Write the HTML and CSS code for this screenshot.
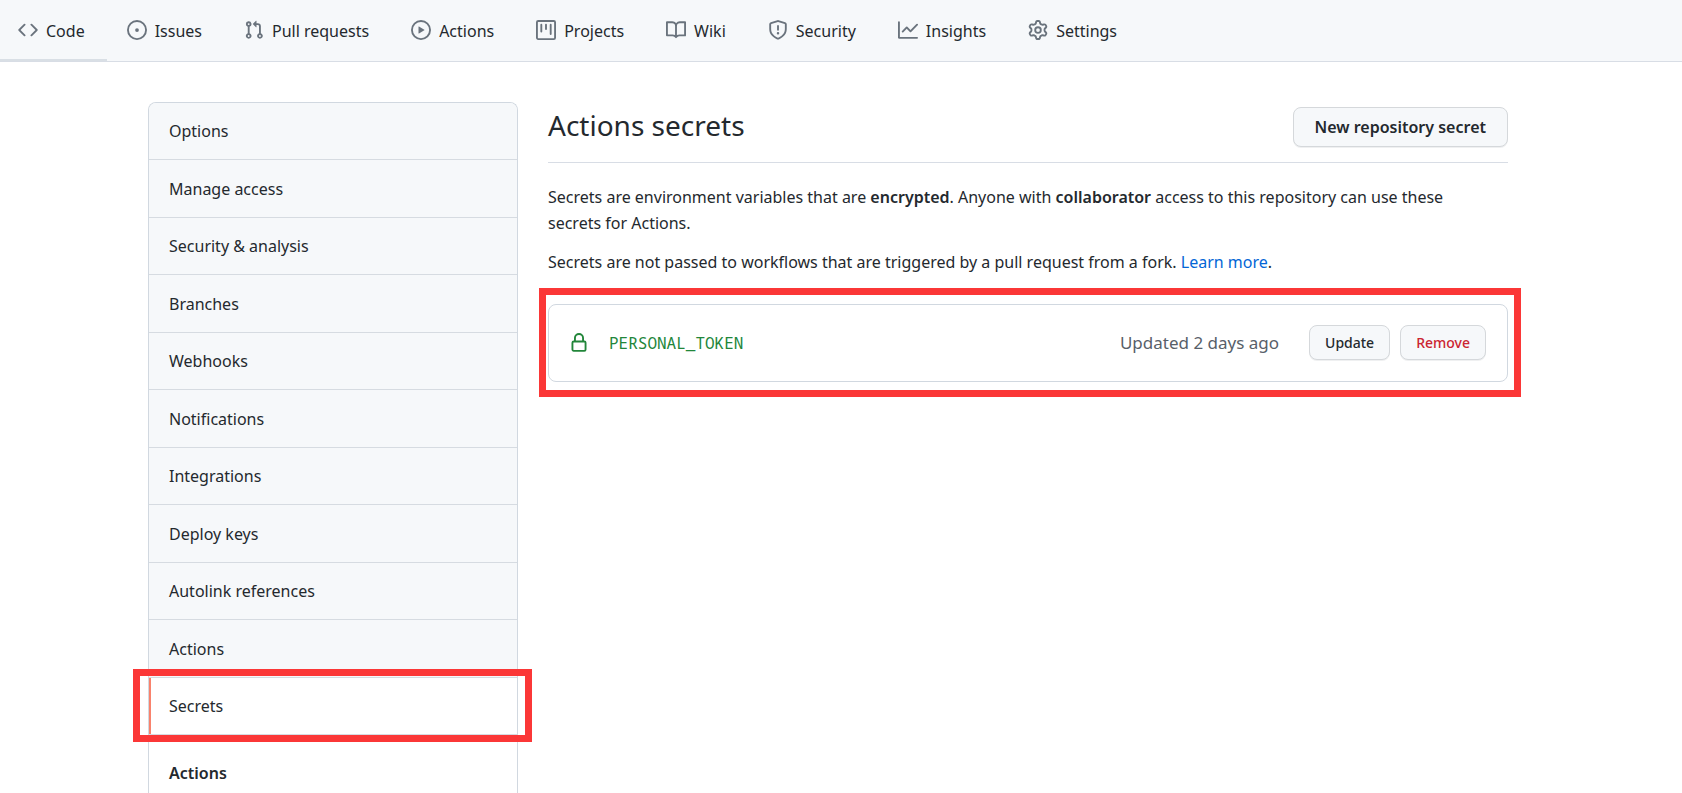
FILE: index.html
```html
<!DOCTYPE html>
<html lang="en">
<head>
<meta charset="utf-8">
<title>Actions secrets</title>
<link rel="stylesheet" href="styles.css">
</head>
<body>
<nav class="tabs" aria-label="Repository">
  <a class="tab tab-current" href="#"><svg class="icon" viewBox="0 0 16 16"><path fill-rule="evenodd" d="M4.72 3.22a.75.75 0 011.06 1.06L2.06 8l3.72 3.72a.75.75 0 11-1.06 1.06L.47 8.53a.75.75 0 010-1.06l4.25-4.25zm6.56 0a.75.75 0 10-1.06 1.06L13.94 8l-3.72 3.72a.75.75 0 101.06 1.06l4.25-4.25a.75.75 0 000-1.06l-4.25-4.25z"/></svg><span class="tab-label">Code</span></a>
  <a class="tab" href="#"><svg class="icon" viewBox="0 0 16 16"><path d="M8 9.5a1.5 1.5 0 100-3 1.5 1.5 0 000 3z"/><path fill-rule="evenodd" d="M8 0a8 8 0 100 16A8 8 0 008 0zM1.5 8a6.5 6.5 0 1113 0 6.5 6.5 0 01-13 0z"/></svg><span class="tab-label">Issues</span></a>
  <a class="tab" href="#"><svg class="icon" viewBox="0 0 16 16"><path fill-rule="evenodd" d="M7.177 3.073L9.573.677A.25.25 0 0110 .854v4.792a.25.25 0 01-.427.177L7.177 3.427a.25.25 0 010-.354zM3.75 2.5a.75.75 0 100 1.5.75.75 0 000-1.5zm-2.25.75a2.25 2.25 0 113 2.122v5.256a2.251 2.251 0 11-1.5 0V5.372A2.25 2.25 0 011.5 3.25zM11 2.5h-1V4h1a1 1 0 011 1v5.628a2.251 2.251 0 101.5 0V5A2.5 2.5 0 0011 2.5zm1 10.25a.75.75 0 111.5 0 .75.75 0 01-1.5 0zM3.75 12a.75.75 0 100 1.5.75.75 0 000-1.5z"/></svg><span class="tab-label">Pull requests</span></a>
  <a class="tab" href="#"><svg class="icon" viewBox="0 0 16 16"><path fill-rule="evenodd" d="M1.5 8a6.5 6.5 0 1113 0 6.5 6.5 0 01-13 0zM8 0a8 8 0 100 16A8 8 0 008 0zM6.379 5.227A.25.25 0 006 5.442v5.117a.25.25 0 00.379.214l4.264-2.559a.25.25 0 000-.428L6.379 5.227z"/></svg><span class="tab-label">Actions</span></a>
  <a class="tab" href="#"><svg class="icon" viewBox="0 0 16 16"><path fill-rule="evenodd" d="M1.75 0A1.75 1.75 0 000 1.75v12.5C0 15.216.784 16 1.75 16h12.5A1.75 1.75 0 0016 14.25V1.75A1.75 1.75 0 0014.25 0H1.75zM1.5 1.75a.25.25 0 01.25-.25h12.5a.25.25 0 01.25.25v12.5a.25.25 0 01-.25.25H1.75a.25.25 0 01-.25-.25V1.75zM11.75 3a.75.75 0 00-.75.75v7.5a.75.75 0 001.5 0v-7.5a.75.75 0 00-.75-.75zm-8.25.75a.75.75 0 011.5 0v5.5a.75.75 0 01-1.5 0v-5.5zM8 3a.75.75 0 00-.75.75v3.5a.75.75 0 001.5 0v-3.5A.75.75 0 008 3z"/></svg><span class="tab-label">Projects</span></a>
  <a class="tab" href="#"><svg class="icon" viewBox="0 0 16 16"><path fill-rule="evenodd" d="M0 1.75A.75.75 0 01.75 1h4.253c1.227 0 2.317.59 3 1.501A3.744 3.744 0 0111.006 1h4.245a.75.75 0 01.75.75v10.5a.75.75 0 01-.75.75h-4.507a2.25 2.25 0 00-1.591.659l-.622.621a.75.75 0 01-1.06 0l-.622-.621A2.25 2.25 0 005.258 13H.75a.75.75 0 01-.75-.75V1.75zm8.755 3a2.25 2.25 0 012.25-2.25H14.5v9h-3.757c-.71 0-1.4.201-1.992.572l.004-7.322zm-1.504 7.324l.004-5.073-.002-2.253A2.25 2.25 0 005.003 2.5H1.5v9h3.757a3.75 3.75 0 011.994.574z"/></svg><span class="tab-label">Wiki</span></a>
  <a class="tab" href="#"><svg class="icon" viewBox="0 0 16 16"><path fill-rule="evenodd" d="M7.467.133a1.75 1.75 0 011.066 0l5.25 1.68A1.75 1.75 0 0115 3.48V7c0 1.566-.32 3.182-1.303 4.682-.983 1.498-2.585 2.813-5.032 3.855a1.7 1.7 0 01-1.33 0c-2.447-1.042-4.049-2.357-5.032-3.855C1.32 10.182 1 8.566 1 7V3.48a1.75 1.75 0 011.217-1.667l5.25-1.68zm.61 1.429a.25.25 0 00-.153 0l-5.25 1.68a.25.25 0 00-.174.238V7c0 1.358.275 2.666 1.057 3.86.784 1.194 2.121 2.34 4.366 3.297a.2.2 0 00.154 0c2.245-.956 3.582-2.104 4.366-3.298C13.225 9.666 13.5 8.36 13.5 7V3.48a.25.25 0 00-.174-.237l-5.25-1.68zM9 10.5a1 1 0 11-2 0 1 1 0 012 0zm-.25-5.75a.75.75 0 10-1.5 0v3a.75.75 0 001.5 0v-3z"/></svg><span class="tab-label">Security</span></a>
  <a class="tab" href="#"><svg class="icon" viewBox="0 0 16 16"><path fill-rule="evenodd" d="M1.5 1.75a.75.75 0 00-1.5 0v12.5c0 .414.336.75.75.75h14.5a.75.75 0 000-1.5H1.5V1.75zm14.28 2.53a.75.75 0 00-1.06-1.06L10 7.94 7.53 5.47a.75.75 0 00-1.06 0L3.22 8.72a.75.75 0 001.06 1.06L7 7.06l2.47 2.47a.75.75 0 001.06 0l5.25-5.25z"/></svg><span class="tab-label">Insights</span></a>
  <a class="tab" href="#"><svg class="icon" viewBox="0 0 16 16"><path fill-rule="evenodd" d="M7.429 1.525a6.593 6.593 0 011.142 0c.036.003.108.036.137.146l.289 1.105c.147.56.55.967.997 1.189.174.086.341.183.501.29.417.278.97.423 1.53.27l1.102-.303c.11-.03.175.016.195.046.219.31.41.641.573.989.014.031.022.11-.059.19l-.815.806c-.411.406-.562.957-.53 1.456a4.588 4.588 0 010 .582c-.032.499.119 1.05.53 1.456l.815.806c.08.08.073.159.059.19a6.494 6.494 0 01-.573.99c-.02.029-.086.074-.195.045l-1.103-.303c-.559-.153-1.112-.008-1.529.27-.16.107-.327.204-.5.29-.449.222-.851.628-.998 1.189l-.289 1.105c-.029.11-.101.143-.137.146a6.613 6.613 0 01-1.142 0c-.036-.003-.108-.037-.137-.146l-.289-1.105c-.147-.56-.55-.967-.997-1.189a4.502 4.502 0 01-.501-.29c-.417-.278-.97-.423-1.53-.27l-1.102.303c-.11.03-.175-.016-.195-.046a6.492 6.492 0 01-.573-.989c-.014-.031-.022-.11.059-.19l.815-.806c.411-.406.562-.957.53-1.456a4.587 4.587 0 010-.582c.032-.499-.119-1.05-.53-1.456l-.815-.806c-.08-.08-.073-.159-.059-.19a6.44 6.44 0 01.573-.99c.02-.029.086-.075.195-.045l1.103.303c.559.153 1.112.008 1.529-.27.16-.107.327-.204.5-.29.449-.222.851-.628.998-1.189l.289-1.105c.029-.11.101-.143.137-.146zM8 0c-.236 0-.47.01-.701.03-.743.065-1.29.615-1.458 1.261l-.29 1.106c-.017.066-.078.158-.211.224a5.994 5.994 0 00-.668.386c-.123.082-.233.09-.3.071L3.27 2.776c-.644-.177-1.392.02-1.82.63a7.977 7.977 0 00-.704 1.217c-.315.675-.111 1.422.363 1.891l.815.806c.05.048.098.147.088.294a6.084 6.084 0 000 .772c.01.147-.038.246-.088.294l-.815.806c-.474.469-.678 1.216-.363 1.891.2.428.436.835.704 1.218.428.609 1.176.806 1.82.63l1.103-.303c.066-.019.176-.011.299.071.213.143.436.272.668.386.133.066.194.158.212.224l.289 1.106c.169.646.715 1.196 1.458 1.26a8.094 8.094 0 001.402 0c.743-.064 1.29-.614 1.458-1.26l.29-1.106c.017-.066.078-.158.211-.224a5.98 5.98 0 00.668-.386c.123-.082.233-.09.3-.071l1.102.302c.644.177 1.392-.02 1.82-.63.268-.382.505-.789.704-1.217.315-.675.111-1.422-.364-1.891l-.814-.806c-.05-.048-.098-.147-.088-.294a6.1 6.1 0 000-.772c-.01-.147.039-.246.088-.294l.814-.806c.475-.469.679-1.216.364-1.891a7.992 7.992 0 00-.704-1.218c-.428-.609-1.176-.806-1.82-.63l-1.103.303c-.066.019-.176.011-.299-.071a5.991 5.991 0 00-.668-.386c-.133-.066-.194-.158-.212-.224L10.16 1.29C9.99.645 9.444.095 8.701.031A8.094 8.094 0 008 0zm1.5 8a1.5 1.5 0 11-3 0 1.5 1.5 0 013 0zM11 8a3 3 0 11-6 0 3 3 0 016 0z"/></svg><span class="tab-label">Settings</span></a>
</nav>
<main class="layout">
  <aside class="menu">
    <ul class="menu-list">
      <li class="menu-row"><a class="menu-link" href="#">Options</a></li>
      <li class="menu-row"><a class="menu-link" href="#">Manage access</a></li>
      <li class="menu-row"><a class="menu-link" href="#">Security &amp; analysis</a></li>
      <li class="menu-row"><a class="menu-link" href="#">Branches</a></li>
      <li class="menu-row"><a class="menu-link" href="#">Webhooks</a></li>
      <li class="menu-row"><a class="menu-link" href="#">Notifications</a></li>
      <li class="menu-row"><a class="menu-link" href="#">Integrations</a></li>
      <li class="menu-row"><a class="menu-link" href="#">Deploy keys</a></li>
      <li class="menu-row"><a class="menu-link" href="#">Autolink references</a></li>
      <li class="menu-row"><a class="menu-link" href="#">Actions</a></li>
      <li class="menu-row menu-row-selected"><a class="menu-link" href="#" aria-current="page">Secrets</a></li>
    </ul>
    <a class="submenu-link" href="#">Actions</a>
  </aside>
  <section class="content">
    <header class="heading">
      <h1 class="title">Actions secrets</h1>
      <button class="button button-large" type="button">New repository secret</button>
    </header>
    <p class="note">Secrets are environment variables that are <strong>encrypted</strong>. Anyone with <strong>collaborator</strong> access to this repository can use these secrets for Actions.</p>
    <p class="note">Secrets are not passed to workflows that are triggered by a pull request from a fork. <a class="link" href="#">Learn more</a>.</p>
    <div class="secret">
      <svg class="icon icon-lock" viewBox="0 0 16 16"><path fill-rule="evenodd" d="M4 4v2h-.25A1.75 1.75 0 002 7.75v5.5c0 .966.784 1.75 1.75 1.75h8.5A1.75 1.75 0 0014 13.25v-5.5A1.75 1.75 0 0012.25 6H12V4a4 4 0 10-8 0zm6.5 2V4a2.5 2.5 0 00-5 0v2h5zM12 7.5h.25a.25.25 0 01.25.25v5.5a.25.25 0 01-.25.25h-8.5a.25.25 0 01-.25-.25v-5.5a.25.25 0 01.25-.25H12z"/></svg>
      <code class="secret-name">PERSONAL_TOKEN</code>
      <span class="secret-date">Updated 2 days ago</span>
      <div class="secret-actions">
        <button class="button" type="button">Update</button>
        <button class="button button-danger" type="button">Remove</button>
      </div>
    </div>
  </section>
</main>
</body>
</html>
```
FILE: styles.css
```css
* {
  box-sizing: border-box;
}

body {
  margin: 0;
  min-height: 100vh;
  display: flex;
  flex-direction: column;
  background: #fff;
  color: #24292e;
  font: 16px/26px "Noto Sans", "Open Sans", sans-serif;
}

a {
  color: inherit;
  text-decoration: none;
}

strong {
  font-weight: 600;
}

.icon {
  flex: none;
  width: 20px;
  height: 20px;
  fill: #6a737d;
}

.tabs {
  display: flex;
  height: 62px;
  background: #f6f8fa;
  border-bottom: 1px solid #d8dde5;
}

.tab {
  display: flex;
  align-items: center;
  gap: 8px;
  padding: 0 22px 0 20px;
  border-bottom: 2px solid transparent;
}

.tab-label {
  padding-top: 2px;
}

.tab-current {
  padding-left: 18px;
  border-bottom-color: #d9dfe5;
}

.layout {
  flex: 1;
  display: grid;
  grid-template-columns: 370px 1fr;
  gap: 30px;
  padding: 40px 174px 0 148px;
}

.menu {
  border: 1px solid #d1d8e0;
  border-bottom: 0;
  border-radius: 8px 8px 0 0;
}

.menu-list {
  margin: 0;
  padding: 0;
  list-style: none;
}

.menu-row {
  position: relative;
  display: flex;
  height: 57px;
  border-bottom: 1px solid #d6dbe1;
  background: #f6f8fa;
}

.menu-row:nth-child(even) {
  height: 58px;
}

.menu-row:first-child {
  border-radius: 7px 7px 0 0;
}

.menu-link {
  flex: 1;
  display: flex;
  align-items: center;
  padding: 0 20px;
}

.menu-row-selected {
  background: #fff;
}

.menu-row-selected .menu-link {
  border-left: 2px solid #f9826c;
  padding-left: 18px;
}

.menu-row-selected::after,
.secret::after {
  content: "";
  position: absolute;
  border: 7px solid #fb3737;
  pointer-events: none;
}

.menu-row-selected::after {
  inset: -9px -15px -8px -16px;
}

.submenu-link {
  display: block;
  padding: 25px 20px 0;
  font-weight: 600;
}

.content {
  min-width: 0;
}

.heading {
  display: flex;
  align-items: center;
  justify-content: space-between;
  height: 61px;
  padding-bottom: 10px;
  border-bottom: 1px solid #d8dde5;
  margin-bottom: 21px;
}

.title {
  margin: 0;
  padding-bottom: 4px;
  font-size: 28px;
  font-weight: 400;
}

.note {
  margin: 0 0 13px;
  padding-right: 20px;
}

.link {
  color: #0366d6;
}

.button {
  height: 35px;
  padding: 0 15px;
  border: 1px solid #d5d8db;
  border-radius: 8px;
  background: #f6f8fa;
  box-shadow: 0 1px 0 #eff0f1;
  color: #24292e;
  font: 500 14px/20px "Noto Sans", "Open Sans", sans-serif;
}

.button-large {
  height: 40px;
  padding: 0 21px;
  font-size: 16px;
  font-weight: 600;
}

.button-danger {
  color: #cb2431;
}

.secret {
  position: relative;
  display: flex;
  align-items: center;
  height: 78px;
  margin-top: 29px;
  padding: 0 21px 1px 20px;
  border: 1px solid #d1d8e0;
  border-radius: 8px;
}

.secret::after {
  inset: -17px -14px -16px -10px;
}

.icon-lock {
  fill: #22863a;
}

.secret-name {
  margin-left: 20px;
  color: #22863a;
  font: 16px/26px "Noto Sans Mono", "DejaVu Sans Mono", monospace;
}

.secret-date {
  margin-left: auto;
  color: #586069;
  font-size: 17px;
}

.secret-actions {
  display: flex;
  gap: 10px;
  margin-left: 30px;
}
```
